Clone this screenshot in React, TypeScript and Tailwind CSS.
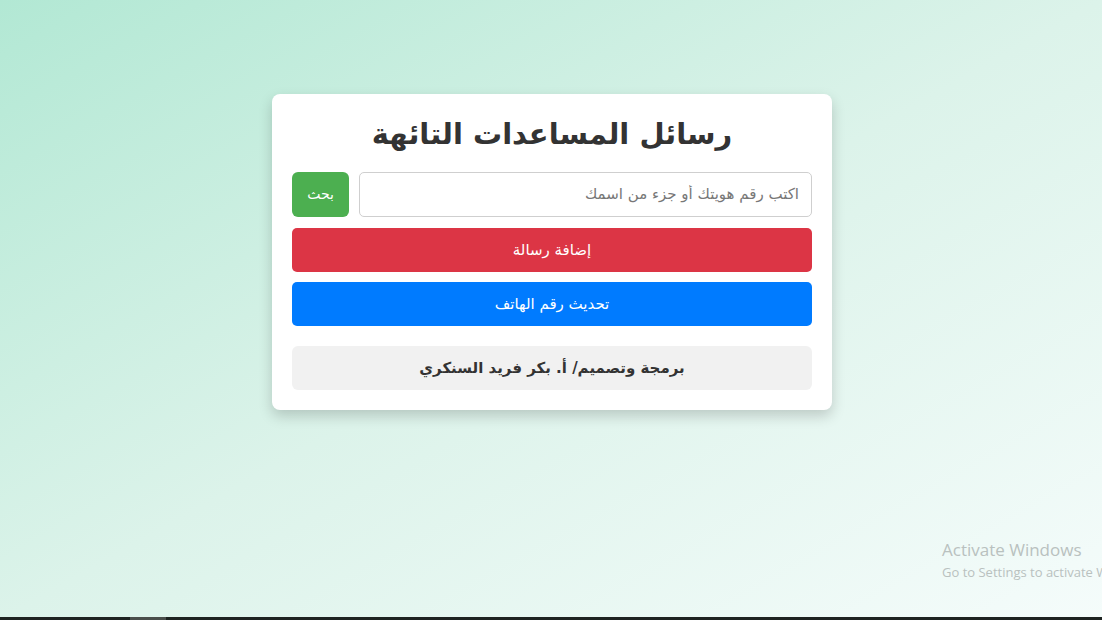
export default function App() {
    const arabic = { fontFamily: '"DejaVu Sans", "Noto Sans", sans-serif' };

    return (
        <div
            dir="rtl"
            className="relative h-[620px] w-full overflow-hidden bg-gradient-to-br from-[#b2e8d4] via-[#dcf3ea] to-[#f5fcfb]"
            style={arabic}
        >
            <div className="flex h-[617px] justify-center pt-[94px] pl-[2px]">
                <div className="h-fit w-[560px] rounded-lg bg-white p-5 shadow-[0_6px_14px_rgba(0,0,0,0.18)]">
                    <h1 className="mb-[18px] text-center text-[29px] leading-[40px] font-bold text-[#333]">
                        رسائل المساعدات التائهة
                    </h1>

                    <div className="mb-[11px] flex h-[45px] gap-2.5">
                        <input
                            className="flex-1 rounded-[5px] border border-[#cfcfcf] px-3 text-[15px] text-[#333] placeholder:text-[#777] outline-none"
                            placeholder="اكتب رقم هويتك أو جزء من اسمك"
                        />
                        <button className="w-[57px] rounded-md bg-[#4caf50] text-[14px] text-white">
                            بحث
                        </button>
                    </div>

                    <button className="mb-2.5 block h-[44px] w-full rounded-[5px] bg-[#dc3545] text-[15px] text-white">
                        إضافة رسالة
                    </button>
                    <button className="block h-[44px] w-full rounded-[5px] bg-[#007bff] text-[15px] text-white">
                        تحديث رقم الهاتف
                    </button>

                    <div className="mt-5 flex h-[44px] items-center justify-center rounded-md bg-[#f1f1f1] text-[15px] font-bold text-[#333]">
                        برمجة وتصميم/ أ. بكر فريد السنكري
                    </div>
                </div>
            </div>

            <div dir="ltr" className="flex h-[3px] bg-[#1e2321]">
                <div className="ml-[130px] w-9 bg-[#4a4e4b]" />
            </div>

            <div
                dir="ltr"
                className="absolute top-[538px] left-[942px] whitespace-nowrap text-[#b9c1bf]"
                style={{ fontFamily: '"Open Sans", "Noto Sans", sans-serif' }}
            >
                <p className="text-[17px] leading-6">Activate Windows</p>
                <p className="text-[13px] leading-5">Go to Settings to activate Windows.</p>
            </div>
        </div>
    );
}
